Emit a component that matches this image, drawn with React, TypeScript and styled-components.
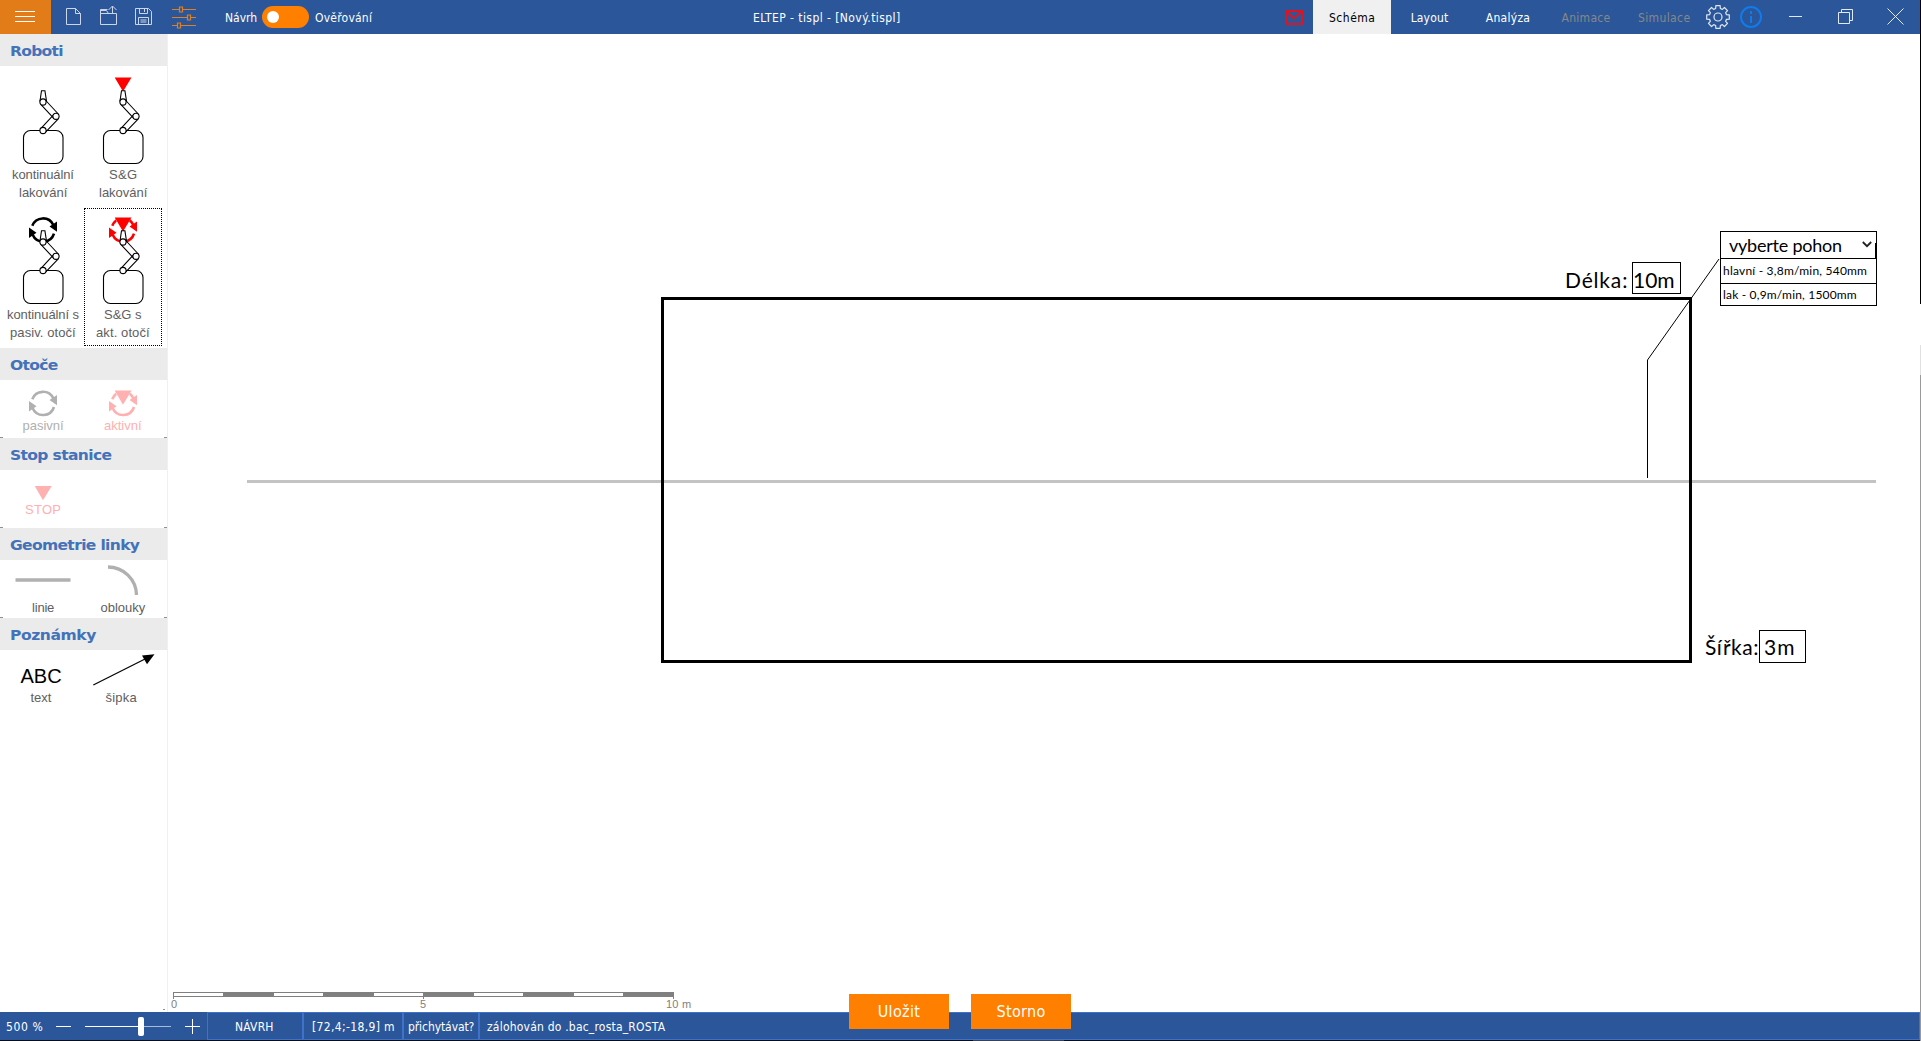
import React, { useLayoutEffect, useRef, useState } from "react";
import styled, { createGlobalStyle } from "styled-components";

const ui = `"DejaVu Sans Condensed", "DejaVu Sans", sans-serif`;
const arial = `"Liberation Sans", Arial, sans-serif`;
const humanist = `Lato, sans-serif`;

const Global = createGlobalStyle`
  * { box-sizing: border-box; }
  body { margin: 0; background: #fff; overflow: hidden; }
  svg { display: block; flex: none; }
`;

/* ---- text that keeps a fixed measure by adjusting its tracking ---- */
const Measure = styled.span<{ $w: number }>`
  display: block;
  flex: none;
  width: ${(p) => p.$w}px;
  white-space: pre;
`;

function Text({ w, children }: { w: number; children: string }) {
  const ref = useRef<HTMLSpanElement>(null);
  const [spacing, setSpacing] = useState(0);
  useLayoutEffect(() => {
    const el = ref.current;
    if (!el) return;
    const natural = el.offsetWidth;
    setSpacing((w - natural) / children.length);
  }, [w, children]);
  return (
    <Measure $w={w}>
      <span ref={ref} style={{ letterSpacing: spacing }}>{children}</span>
    </Measure>
  );
}

/* ---- frame ---- */
const Frame = styled.div`
  display: grid;
  grid-template-columns: 1920px 1px;
  width: 1921px;
  height: 1041px;
`;
const Window = styled.div`
  display: grid;
  grid-template-rows: 34px 978px 28px 1px;
  font-family: ${ui};
  font-size: 12px;
`;
const Edge = styled.div`
  background: linear-gradient(#000 0 304px, #fff 304px 345px, #e0e0e0 345px 375px, #9a9a9a 375px);
`;
const BottomEdge = styled.div`
  background: linear-gradient(90deg, #0a0d14 0 973px, #39414e 973px 1064px, #0a0d14 1064px);
`;

/* ---- title bar ---- */
const TitleBar = styled.header`
  display: flex;
  align-items: center;
  height: 34px;
  background: #2b579a;
  color: #fff;
`;
const Group = styled.div<{ $w: number }>`
  display: flex;
  align-items: center;
  flex: none;
  width: ${(p) => p.$w}px;
  height: 34px;
`;
const Caption = styled.div`
  padding-top: 1px;
`;
const MenuButton = styled.button`
  display: flex;
  flex-direction: column;
  justify-content: center;
  align-items: center;
  gap: 4px;
  width: 51px;
  height: 34px;
  padding: 0 1px 1px 0;
  border: 0;
  background: #e27c19;
`;
const MenuLine = styled.span`
  width: 20px;
  height: 1px;
  background: #fff;
`;
const Tools = styled(Group)`
  padding-left: 13px;
`;
const Toggle = styled.span`
  display: flex;
  align-items: center;
  flex: none;
  width: 47px;
  height: 22px;
  margin: 0 6px 0 5px;
  padding-left: 5px;
  border-radius: 11px;
  background: #ff8000;
`;
const Knob = styled.span`
  width: 12px;
  height: 12px;
  border-radius: 50%;
  background: #fff;
`;
const Tab = styled.button<{ $w: number; $state?: "active" | "off" }>`
  display: flex;
  align-items: center;
  justify-content: center;
  flex: none;
  width: ${(p) => p.$w}px;
  height: 34px;
  padding: 1px 0 0;
  border: 0;
  font: inherit;
  background: ${(p) => (p.$state === "active" ? "#f0f0f0" : "transparent")};
  color: ${(p) => (p.$state === "active" ? "#000" : p.$state === "off" ? "#868788" : "#fff")};
`;

/* ---- body ---- */
const Body = styled.div`
  display: grid;
  grid-template-columns: 168px 1fr;
`;
const Sidebar = styled.aside`
  display: flex;
  flex-direction: column;
  border-right: 1px solid #f0f0f0;
  font-family: ${arial};
  font-size: 13px;
`;
const Section = styled.section<{ $h: number }>`
  height: ${(p) => p.$h}px;
`;
const Heading = styled.h2`
  display: flex;
  align-items: center;
  height: 32px;
  margin: 0;
  padding: 1px 0 0 10px;
  background: #ebebeb;
  color: #4472b9;
  font: bold 14px "DejaVu Sans", Verdana, sans-serif;

  > span {
    transform: scaleX(1.11);
    transform-origin: left;
  }
`;
const Palette = styled.div<{ $left?: number; $top?: number }>`
  display: grid;
  grid-template-columns: 78px 78px;
  gap: 2px;
  padding: ${(p) => p.$top ?? 0}px 0 0 ${(p) => p.$left ?? 4}px;
`;
const Item = styled.div<{ $tone?: string }>`
  display: flex;
  flex-direction: column;
  align-items: center;
  line-height: 18px;
  color: ${(p) => p.$tone ?? "#606060"};
`;
const RobotItem = styled(Item)<{ $selected?: boolean }>`
  height: 138px;
  outline: ${(p) => (p.$selected ? "1px dotted #000" : "none")};
  outline-offset: -1px;
`;
const Abc = styled.div`
  height: 39px;
  padding-top: 16px;
  color: #000;
  font-size: 20px;
  line-height: 20px;
`;
const Ticks = styled.div`
  display: flex;
  justify-content: space-between;
  height: 1px;
  margin-top: -1px;
  &::before, &::after {
    content: "";
    width: 3px;
    height: 1px;
    background: #909090;
  }
`;
const LastTick = styled.div`
  width: 2px;
  height: 1px;
  margin: auto 2px 2px auto;
  background: #909090;
`;

/* ---- drawing canvas ---- */
const Canvas = styled.main`
  position: relative;
  background: #fff;
`;
const Drawing = styled.svg`
  position: absolute;
  inset: 0;
`;
const Placed = styled.div<{ $x: number; $y: number }>`
  position: absolute;
  left: ${(p) => p.$x - 168}px;
  top: ${(p) => p.$y - 34}px;
`;
const Dimension = styled(Placed)`
  display: flex;
  align-items: center;
  font: 21px ${humanist};
  color: #000;
`;
const ValueBox = styled.div<{ $w: number; $h: number; $pad: number; $gap?: number; $drop?: number }>`
  display: flex;
  align-items: center;
  width: ${(p) => p.$w}px;
  height: ${(p) => p.$h}px;
  margin-left: ${(p) => p.$gap ?? 0}px;
  padding: ${(p) => p.$drop ?? 0}px 0 0 ${(p) => p.$pad}px;
  border: 1px solid #000;
`;
const DimName = styled.div<{ $drop?: number }>`
  padding-top: ${(p) => p.$drop ?? 0}px;
`;
const Picker = styled(Placed)`
  width: 157px;
  border: 1px solid #000;
  background: #fff;
  font-family: ${humanist};
  font-size: 12px;
  color: #000;
`;
const PickerHead = styled.div`
  display: flex;
  align-items: center;
  justify-content: space-between;
  height: 26px;
  padding: 0 4px 0 8px;
  background: linear-gradient(#000, #000) 100% 11px / 1px 15px no-repeat;
  font-size: 18px;
`;
const PickerRow = styled.div<{ $h: number }>`
  display: flex;
  align-items: center;
  height: ${(p) => p.$h}px;
  padding: 0 0 1px 2px;
  border-top: 1px solid #000;
`;
const Ruler = styled(Placed)`
  width: 520px;
  color: #808080;
  font: 11px ${arial};
`;
const RulerBar = styled.div`
  display: grid;
  grid-template-columns: repeat(5, 49px 51px);
  width: 501px;
  height: 5px;
  border: 1px solid #808080;
  border-width: 1px 0 1px 1px;
`;
const RulerCell = styled.span<{ $on: boolean }>`
  background: ${(p) => (p.$on ? "#808080" : "#fff")};
`;
const RulerTicks = styled.div`
  display: flex;
  justify-content: space-between;
  width: 501px;
  height: 2px;
`;
const RulerTick = styled.span`
  width: 1px;
  height: 2px;
  background: #808080;
`;
const RulerLabels = styled.div`
  display: grid;
  grid-template-columns: 249px 246px auto;
  margin: 0 0 0 -2px;
  line-height: 11px;
`;
const Actions = styled(Placed)`
  display: flex;
  gap: 22px;
  z-index: 2;
`;
const ActionButton = styled.button`
  display: flex;
  align-items: center;
  justify-content: center;
  width: 100px;
  height: 35px;
  padding: 0;
  border: 0;
  background: #ff8000;
  color: #fff;
  font: 16px ${ui};
`;

/* ---- status bar ---- */
const StatusBar = styled.footer`
  display: flex;
  align-items: stretch;
  background: #2b579a;
  color: #fff;
`;
const Zoom = styled.div`
  display: flex;
  align-items: center;
  width: 207px;
  padding-left: 6px;
`;
const StatusCell = styled.div<{ $w?: number; $pad: number }>`
  display: flex;
  align-items: center;
  flex: ${(p) => (p.$w ? `0 0 ${p.$w}px` : "1")};
  padding: 2px 0 0 ${(p) => p.$pad}px;
  border: 1px solid #3f72cc;
`;
const ZoomValue = styled.div`
  padding-top: 2px;
`;

/* ---- icons ---- */
const FileTools = () => (
  <svg width="134" height="34" viewBox="64 0 134 34" fill="none">
    <g stroke="#ccd6e8" strokeWidth="1">
      <path d="M66.500 8.500h9l5 5v11h-14zM75.500 8.500v5h5" />
      <path d="M107.500 9.500h-7v15h16v-11M100.500 13.500h16M112.500 13.500V6.500M108.500 10l4-4 4 4M100.500 10.500h6l2 3" />
      <path d="M135.500 8.500h13l3 3v13h-16zM138.500 24.500v-7h10v7M139.500 8.500v5h8v-5M144.500 9v3M140.500 20h6M140.500 22h6" />
    </g>
    <g stroke="#e08021" strokeWidth="1.200">
      <path d="M172 9.500h7M183 9.500h13M172 17.500h15M191 17.500h5M172 25.500h5M181 25.500h15" />
      <path d="M179.500 7h3v5h-3zM187.500 15h3v5h-3zM177.500 23h3v5h-3z" />
    </g>
  </svg>
);

const MailIcon = () => (
  <svg width="29" height="34" viewBox="1284 0 29 34" fill="none" stroke="#dc1424" strokeWidth="2">
    <path d="M1286 11h16v13h-16z" />
    <path d="M1286 11l8 7.500 8-7.500" strokeWidth="2" />
  </svg>
);

const gear = (() => {
  const pts: string[] = [];
  for (let i = 0; i < 8; i++) {
    const base = (i * Math.PI) / 4;
    ([[-0.27, 8.8], [-0.19, 11.5], [0.19, 11.5], [0.27, 8.8]] as const).forEach(([a, r]) =>
      pts.push(`${(1718 + Math.cos(base + a) * r).toFixed(2)},${(17 + Math.sin(base + a) * r).toFixed(2)}`)
    );
  }
  return pts.join(" ");
})();

const WindowIcons = () => (
  <svg width="216" height="34" viewBox="1704 0 216 34" fill="none">
    <g stroke="#dfe7f2" strokeWidth="1.200" strokeLinejoin="round">
      <polygon points={gear} />
      <circle cx="1718" cy="17" r="4" />
    </g>
    <g stroke="#0f7bec" strokeWidth="2">
      <circle cx="1751" cy="17" r="10" />
      <path d="M1751 16v7M1751 11v3" />
    </g>
    <g stroke="#e4eaf4" strokeWidth="1">
      <path d="M1789 16.500h13" />
      <path d="M1838.500 12.500h11v11h-11zM1841.500 12.500v-3h11v11h-3" />
      <path d="M1887.500 8.500l16 16M1903.500 8.500l-16 16" />
    </g>
  </svg>
);

/* two arrows chasing each other around a centre of (39, cy) */
const Rotation = ({ cy, color }: { cy: number; color: string }) => (
  <g transform={`translate(39 ${cy})`}>
    <g fill="none" stroke={color} strokeWidth="2.600">
      <path d="M-10.700 -4A11.400 11.400 0 0 1 10.300 -4.800" />
      <path d="M11 3.800A11.400 11.400 0 0 1 -10.300 5" />
    </g>
    <path d="M14 -8.300V2L6.500 -3.200zM-14 8.300V-2.300L-6.500 3z" fill={color} />
  </g>
);

const Robot = ({ rotation, stop }: { rotation?: string; stop?: boolean }) => (
  <svg width="78" height="98" viewBox="0 0 78 98">
    {rotation && (
      <g>
        <Rotation cy={21.8} color={rotation} />
        {stop && <path d="M31.500 6h15L39 24z" fill="#fff" stroke="#fff" strokeWidth="3.500" />}
      </g>
    )}
    {stop && <path d="M30.700 9.500h16.800L39 23.500z" fill="red" />}
    <g fill="none" stroke="#000" strokeWidth="1.100">
      <rect x="19.500" y="62.500" width="39.500" height="33" rx="7" />
      <path d="M36 33l1.500-10.300h3.400L42.500 33z" fill={stop && rotation ? "none" : "#fff"} />
      <path d="M36.800 36.300l13 14M41.300 32l13 14M37 60.300l13-14M41.300 64.300l13-13.500" />
      <g fill="#fff">
        <circle cx="39" cy="34" r="3.100" />
        <circle cx="52" cy="48.300" r="3.100" />
        <circle cx="39" cy="62.500" r="3.100" />
      </g>
    </g>
  </svg>
);

type RobotKind = { lines: [string, number][]; stop?: boolean; rotation?: string; selected?: boolean };
const robots: RobotKind[] = [
  { lines: [["kontinuální", 62], ["lakování", 48]] },
  { lines: [["S&G", 28], ["lakování", 48]], stop: true },
  { lines: [["kontinuální s", 72], ["pasiv. otočí", 66]], rotation: "#000" },
  { lines: [["S&G s", 38], ["akt. otočí", 54]], rotation: "#f00", stop: true, selected: true },
];

export default function App() {
  return (
    <Frame>
      <Global />
      <Window>
        <TitleBar>
          <MenuButton><MenuLine /><MenuLine /><MenuLine /></MenuButton>
          <Tools $w={174}><FileTools /></Tools>
          <Group $w={528}>
            <Caption><Text w={32}>Návrh</Text></Caption>
            <Toggle><Knob /></Toggle>
            <Caption><Text w={57}>Ověřování</Text></Caption>
          </Group>
          <Group $w={531}><Caption><Text w={148}>ELTEP - tispl - [Nový.tispl]</Text></Caption></Group>
          <MailIcon />
          <Tab $w={78} $state="active"><Text w={46}>Schéma</Text></Tab>
          <Tab $w={77}><Text w={38}>Layout</Text></Tab>
          <Tab $w={80}><Text w={45}>Analýza</Text></Tab>
          <Tab $w={76} $state="off"><Text w={49}>Animace</Text></Tab>
          <Tab $w={80} $state="off"><Text w={52}>Simulace</Text></Tab>
          <Group $w={216}><WindowIcons /></Group>
        </TitleBar>

        <Body>
          <Sidebar>
            <Section $h={314}>
              <Heading><Text w={48}>Roboti</Text></Heading>
              <Palette $top={2}>
                {robots.map((r, i) => (
                  <RobotItem key={i} $selected={r.selected}>
                    <Robot rotation={r.rotation} stop={r.stop} />
                    {r.lines.map(([t, w]) => <Text key={t} w={w}>{t}</Text>)}
                  </RobotItem>
                ))}
              </Palette>
            </Section>
            <Section $h={90}>
              <Heading><Text w={43}>Otoče</Text></Heading>
              <Palette>
                <Item $tone="#b0b0b0">
                  <svg width="78" height="37"><Rotation cy={23.2} color="#b0b0b0" /></svg>
                  <Text w={41}>pasivní</Text>
                </Item>
                <Item $tone="#ffb0b0">
                  <svg width="78" height="37">
                    <Rotation cy={23.2} color="#ffb0b0" />
                    <path d="M31.500 7h15L39 26z" fill="#fff" stroke="#fff" strokeWidth="3.500" />
                    <path d="M30.700 10.500h16.800L39 24.800z" fill="#ffb0b0" />
                  </svg>
                  <Text w={38}>aktivní</Text>
                </Item>
              </Palette>
            </Section>
            <Ticks />
            <Section $h={90}>
              <Heading><Text w={91}>Stop stanice</Text></Heading>
              <Palette>
                <Item $tone="#ffb0b0">
                  <svg width="78" height="31"><path d="M30.700 16h17L39 30.300z" fill="#ffb0b0" /></svg>
                  <Text w={36}>STOP</Text>
                </Item>
              </Palette>
            </Section>
            <Ticks />
            <Section $h={90}>
              <Heading><Text w={116}>Geometrie linky</Text></Heading>
              <Palette>
                <Item>
                  <svg width="78" height="39"><path d="M11.500 20h55" stroke="#b0b0b0" strokeWidth="3.500" /></svg>
                  <Text w={22}>linie</Text>
                </Item>
                <Item>
                  <svg width="78" height="39"><path d="M24 7A28.500 28.500 0 0 1 52.500 35" fill="none" stroke="#b0b0b0" strokeWidth="3.300" /></svg>
                  <Text w={45}>oblouky</Text>
                </Item>
              </Palette>
            </Section>
            <Ticks />
            <Section $h={90}>
              <Heading><Text w={77}>Poznámky</Text></Heading>
              <Palette $left={2}>
                <Item>
                  <Abc><Text w={41}>ABC</Text></Abc>
                  <Text w={21}>text</Text>
                </Item>
                <Item>
                  <svg width="78" height="39">
                    <path d="M11.300 35L64 8.500" stroke="#000" strokeWidth="1.200" />
                    <path d="M72.500 4.200L60 5.600l5 8.600z" />
                  </svg>
                  <Text w={31}>šipka</Text>
                </Item>
              </Palette>
            </Section>
            <LastTick />
          </Sidebar>

          <Canvas>
            <Drawing width="1752" height="978" viewBox="168 34 1752 978" fill="none">
              <g shapeRendering="crispEdges">
                <path d="M247 481.500H1876" stroke="#c3c3c3" strokeWidth="3" />
                <rect x="662.500" y="298.500" width="1028" height="363" stroke="#000" strokeWidth="3" />
                <path d="M1647.500 360V478" stroke="#000" />
              </g>
              <path d="M1719 259L1647.500 360" stroke="#000" strokeWidth="1" />
            </Drawing>
            <Dimension $x={1565} $y={262}>
              <DimName $drop={2}><Text w={63}>Délka:</Text></DimName>
              <ValueBox $w={49} $h={32} $pad={0} $gap={4} $drop={2}><Text w={42}>10m</Text></ValueBox>
            </Dimension>
            <Dimension $x={1705} $y={630}>
              <DimName><Text w={54}>Šířka:</Text></DimName>
              <ValueBox $w={47} $h={33} $pad={4}><Text w={31}>3m</Text></ValueBox>
            </Dimension>
            <Picker $x={1720} $y={231}>
              <PickerHead>
                <Text w={113}>vyberte pohon</Text>
                <svg width="10" height="12" fill="none" stroke="#222" strokeWidth="1.800"><path d="M.800 3l4.200 4.200L9.200 3" /></svg>
              </PickerHead>
              <PickerRow $h={25}><Text w={144}>hlavní - 3,8m/min, 540mm</Text></PickerRow>
              <PickerRow $h={22}><Text w={134}>lak - 0,9m/min, 1500mm</Text></PickerRow>
            </Picker>
            <Ruler $x={173} $y={992}>
              <RulerBar>
                {Array.from({ length: 10 }, (_, i) => <RulerCell key={i} $on={i % 2 === 1} />)}
              </RulerBar>
              <RulerTicks><RulerTick /><RulerTick /><RulerTick /></RulerTicks>
              <RulerLabels><Text w={6}>0</Text><Text w={6}>5</Text><Text w={25}>10 m</Text></RulerLabels>
            </Ruler>
            <Actions $x={849} $y={994}>
              <ActionButton><Text w={43}>Uložit</Text></ActionButton>
              <ActionButton><Text w={49}>Storno</Text></ActionButton>
            </Actions>
          </Canvas>
        </Body>

        <StatusBar>
          <Zoom>
            <ZoomValue><Text w={37}>500 %</Text></ZoomValue>
            <svg width="158" height="28" viewBox="43 1012 158 28" fill="none" stroke="#fff" strokeWidth="1">
              <path d="M56 1026.500h15M85 1026.500h53M185 1026.500h15M192.500 1019v15" />
              <path d="M144 1026.500h27" stroke="#a9bcdb" />
              <rect x="138" y="1017" width="6" height="19" rx="2" fill="#fff" stroke="none" />
            </svg>
          </Zoom>
          <StatusCell $w={96} $pad={27}><Text w={39}>NÁVRH</Text></StatusCell>
          <StatusCell $w={100} $pad={8}><Text w={83}>[72,4;-18,9] m</Text></StatusCell>
          <StatusCell $w={76} $pad={4}><Text w={66}>přichytávat?</Text></StatusCell>
          <StatusCell $pad={7}><Text w={178}>zálohován do .bac_rosta_ROSTA</Text></StatusCell>
        </StatusBar>
        <BottomEdge />
      </Window>
      <Edge />
    </Frame>
  );
}
